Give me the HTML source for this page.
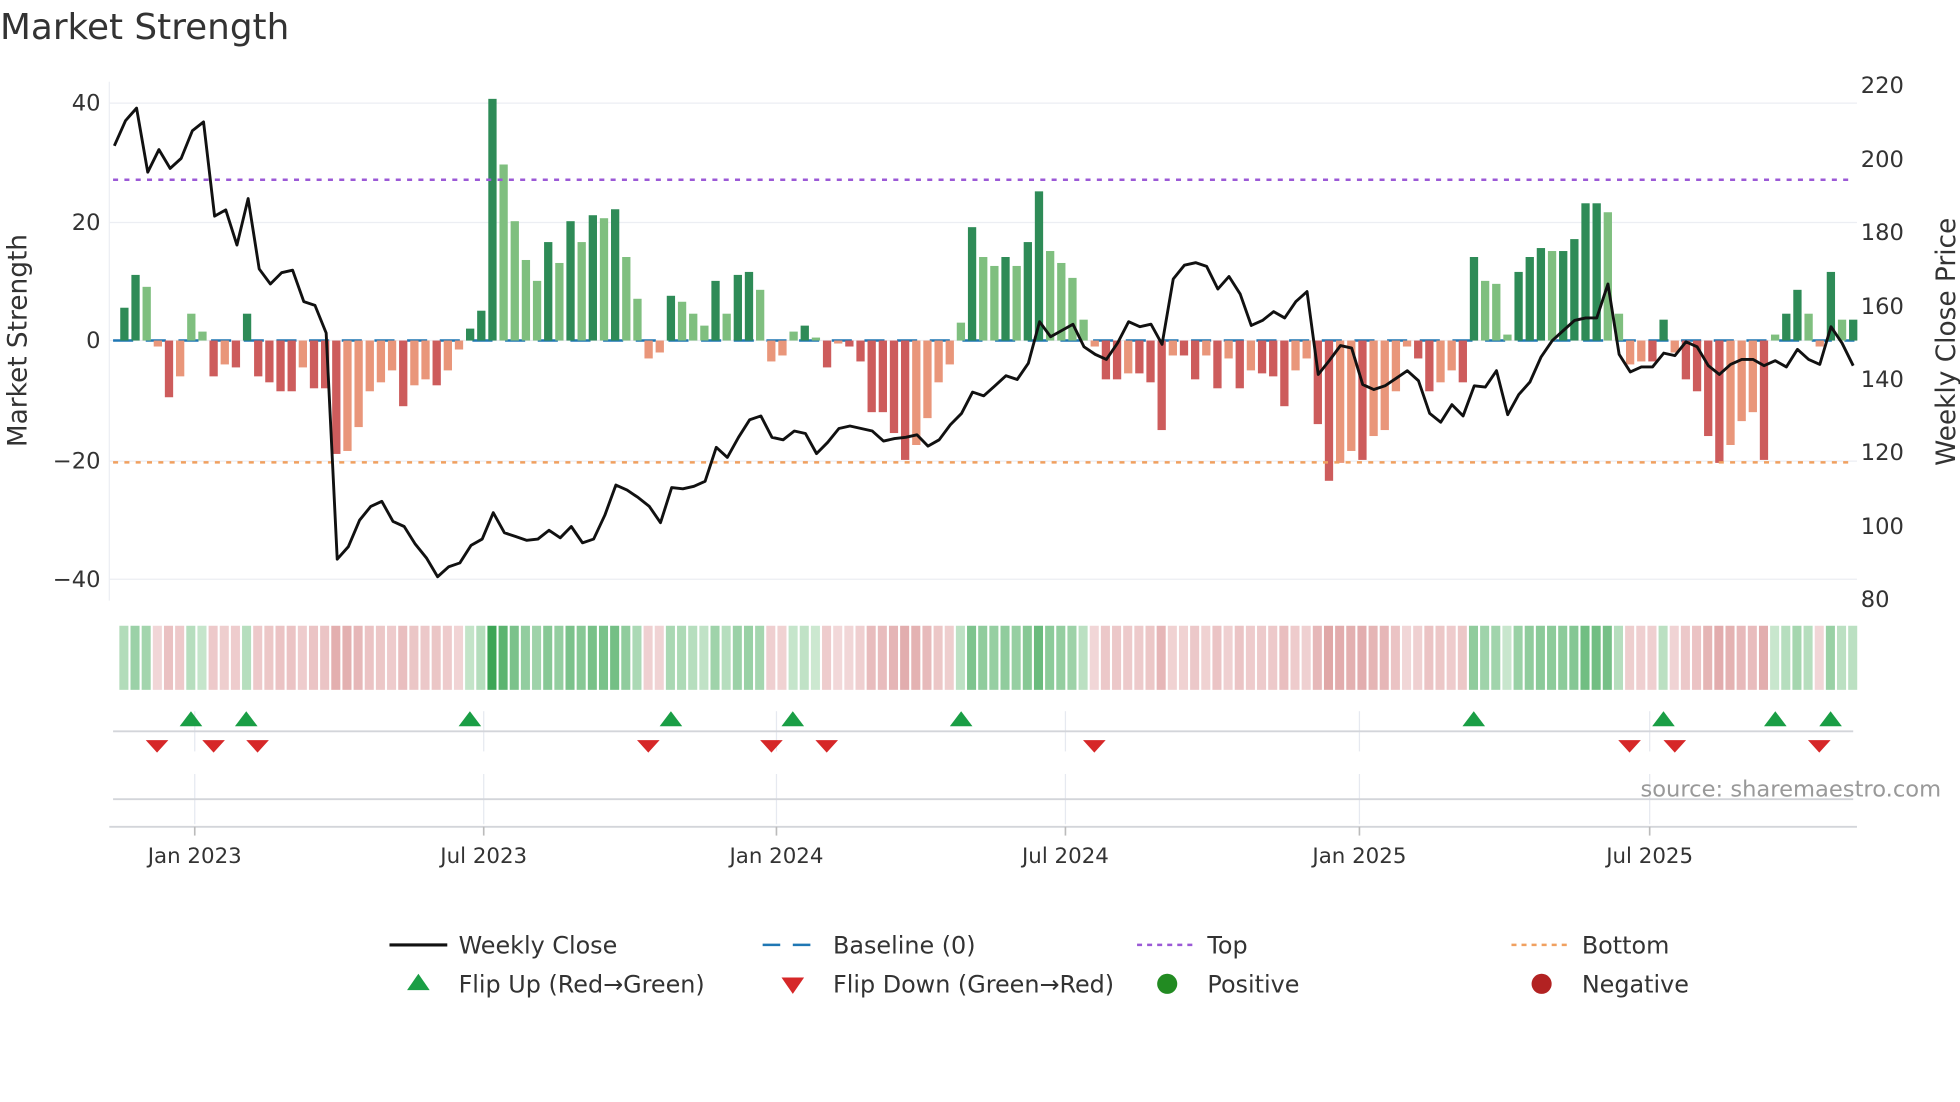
<!DOCTYPE html>
<html><head><meta charset="utf-8"><style>
html,body{margin:0;padding:0;background:#fff;width:1960px;height:1102px;overflow:hidden}
svg{display:block}
text{font-family:"DejaVu Sans","Liberation Sans",sans-serif}
</style></head><body>
<svg id="s" width="1960" height="1102" viewBox="0 0 1560 877" xmlns="http://www.w3.org/2000/svg">
<text x="0" y="31" font-size="28.5" fill="#333">Market Strength</text>
<g id="grid" stroke="#eceef3" stroke-width="1">
<line x1="87" x2="1478" y1="82" y2="82"/><line x1="87" x2="1478" y1="177" y2="177"/><line x1="87" x2="1478" y1="271" y2="271"/><line x1="87" x2="1478" y1="367" y2="367"/><line x1="87" x2="1478" y1="461" y2="461"/>
<line x1="87" x2="87" y1="65" y2="478"/>
</g>
<g font-size="18" fill="#333" text-anchor="end">
<text x="80" y="88">40</text><text x="80" y="183">20</text><text x="80" y="277">0</text><text x="80" y="373">−20</text><text x="80" y="467">−40</text>
</g>
<g font-size="18" fill="#333">
<text x="1481" y="74">220</text><text x="1481" y="133">200</text><text x="1481" y="191">180</text><text x="1481" y="250">160</text><text x="1481" y="308">140</text><text x="1481" y="366">120</text><text x="1481" y="425">100</text><text x="1481" y="483">80</text>
</g>
<text transform="translate(21,271) rotate(-90)" font-size="21" fill="#333" text-anchor="middle">Market Strength</text>
<text transform="translate(1556,272) rotate(-90)" font-size="21" fill="#333" text-anchor="middle">Weekly Close Price</text>
<line x1="90" x2="1476" y1="271" y2="271" stroke="#1f77b4" stroke-width="2" stroke-dasharray="16,10"/>
<g id="bars"></g>
<line x1="90" x2="1476" y1="143" y2="143" stroke="#9b59d6" stroke-width="2" stroke-dasharray="4,5"/>
<line x1="90" x2="1476" y1="368" y2="368" stroke="#f0a060" stroke-width="2" stroke-dasharray="4,5"/>
<polyline id="price" fill="none" stroke="#111" stroke-width="2.3" stroke-linejoin="round"/>
<g id="heat"></g>
<g stroke="#e6e9f0" stroke-width="1">
<line x1="155" x2="155" y1="566" y2="598"/><line x1="385" x2="385" y1="566" y2="598"/><line x1="618" x2="618" y1="566" y2="598"/><line x1="848" x2="848" y1="566" y2="598"/><line x1="1082" x2="1082" y1="566" y2="598"/><line x1="1313" x2="1313" y1="566" y2="598"/>
<line x1="155" x2="155" y1="616" y2="656"/><line x1="385" x2="385" y1="616" y2="656"/><line x1="618" x2="618" y1="616" y2="656"/><line x1="848" x2="848" y1="616" y2="656"/><line x1="1082" x2="1082" y1="616" y2="656"/><line x1="1313" x2="1313" y1="616" y2="656"/>
</g>
<line x1="90" x2="1475" y1="582" y2="582" stroke="#d3d5da" stroke-width="1.5"/>
<line x1="90" x2="1475" y1="636" y2="636" stroke="#d3d5da" stroke-width="1.5"/>
<line x1="87" x2="1478" y1="658" y2="658" stroke="#d3d5da" stroke-width="1.5"/>
<g stroke="#bbb" stroke-width="1.3">
<line x1="155" x2="155" y1="658" y2="665"/><line x1="385" x2="385" y1="658" y2="665"/><line x1="618" x2="618" y1="658" y2="665"/><line x1="848" x2="848" y1="658" y2="665"/><line x1="1082" x2="1082" y1="658" y2="665"/><line x1="1313" x2="1313" y1="658" y2="665"/>
</g>
<g id="marks"></g>
<text x="1545" y="634" font-size="18" fill="#999" text-anchor="end">source: sharemaestro.com</text>
<g font-size="17" fill="#333" text-anchor="middle">
<text x="155" y="687">Jan 2023</text><text x="385" y="687">Jul 2023</text><text x="618" y="687">Jan 2024</text><text x="848" y="687">Jul 2024</text><text x="1082" y="687">Jan 2025</text><text x="1313" y="687">Jul 2025</text>
</g>
<g font-size="19" fill="#333">
<line x1="310" x2="356" y1="752" y2="752" stroke="#111" stroke-width="2.5"/><text x="365" y="759">Weekly Close</text>
<line x1="607" x2="652" y1="752" y2="752" stroke="#1f77b4" stroke-width="2" stroke-dasharray="14,10"/><text x="663" y="759">Baseline (0)</text>
<line x1="905" x2="950" y1="752" y2="752" stroke="#9b59d6" stroke-width="2" stroke-dasharray="4,4"/><text x="961" y="759">Top</text>
<line x1="1203" x2="1248" y1="752" y2="752" stroke="#f0a060" stroke-width="2" stroke-dasharray="4,4"/><text x="1259" y="759">Bottom</text>
<polygon points="324,788 342,788 333,775" fill="#1a9e45"/><text x="365" y="790">Flip Up (Red→Green)</text>
<polygon points="622,778 640,778 631,791" fill="#d62728"/><text x="663" y="790">Flip Down (Green→Red)</text>
<circle cx="929" cy="783" r="8" fill="#228b22"/><text x="961" y="790">Positive</text>
<circle cx="1227" cy="783" r="8" fill="#b22222"/><text x="1259" y="790">Negative</text>
</g>
</svg>
<script>
var V=[5.5,11,9,-1,-9.5,-6,4.5,1.5,-6,-4,-4.5,4.5,-6,-7,-8.5,-8.5,-4.5,-8,-8,-19,-18.5,-14.5,-8.5,-7,-5,-11,-7.5,-6.5,-7.5,-5,-1.5,2,5,40.5,29.5,20,13.5,10,16.5,13,20,16.5,21,20.5,22,14,7,-3,-2,7.5,6.5,4.5,2.5,10,4.5,11,11.5,8.5,-3.5,-2.5,1.5,2.5,0.5,-4.5,-0.5,-1,-3.5,-12,-12,-15.5,-20,-17.5,-13,-7,-4,3,19,14,12.5,14,12.5,16.5,25,15,13,10.5,3.5,-1,-6.5,-6.5,-5.5,-5.5,-7,-15,-2.5,-2.5,-6.5,-2.5,-8,-3,-8,-5,-5.5,-6,-11,-5,-3,-14,-23.5,-20.5,-18.5,-20,-16,-15,-8.5,-1,-3,-8.5,-7,-5,-7,14,10,9.5,1,11.5,14,15.5,15,15,17,23,23,21.5,4.5,-4,-3.5,-3.5,3.5,-2,-6.5,-8.5,-16,-20.5,-17.5,-13.5,-12,-20,1,4.5,8.5,4.5,-1,11.5,3.5,3.5];
var P=[116,96,86,137,119,134,126,104,97,172,167,195,158,214,226,217,215,240,243,265,445,435,414,403,399,415,419,433,444,459,451,448,434,429,408,424,427,430,429,422,428,419,432,429,410,386,390,396,403,416,388,389,387,383,356,364,348,334,331,348,350,343,345,361,352,341,339,341,343,351,349,348,346,355,350,338,329,312,315,307,299,302,289,256,268,263,258,276,282,286,273,256,260,258,274,222,211,209,212,230,220,234,259,255,248,253,240,232,298,287,275,277,306,310,307,301,295,303,329,336,322,331,307,308,295,330,314,304,284,271,263,255,253,253,226,282,296,292,292,281,283,272,276,291,298,290,286,286,291,287,292,278,286,290,260,273,291];
var ns="http://www.w3.org/2000/svg";
function el(t,a,p){var e=document.createElementNS(ns,t);for(var k in a)e.setAttribute(k,a[k]);document.getElementById(p).appendChild(e);}
var x0=99,dx=(1475-99)/(V.length-1);
for(var i=0;i<V.length;i++){
 var x=x0+i*dx,v=V[i],prev=i?V[i-1]:0;
 var up=Math.abs(v)>=Math.abs(prev);
 var c=v>=0?(up?'#2e8b57':'#7fbf7f'):(up?'#cd5c5c':'#e9967a');
 var h=Math.abs(v)*4.75;
 el('rect',{x:x-3.3,y:v>=0?271-h:271,width:6.6,height:Math.max(h,0.5),fill:c},'bars');
 var t=Math.min(1,Math.abs(v)/40);t=Math.pow(t,0.8);
 var hc;
 if(v>=0){var r=Math.round(208-(208-60)*t),g=Math.round(234-(234-165)*t),b=Math.round(212-(212-85)*t);hc='rgb('+r+','+g+','+b+')';}
 else{var r=Math.round(243-(243-214)*t),g=Math.round(218-(218-140)*t),b=Math.round(219-(219-140)*t);hc='rgb('+r+','+g+','+b+')';}
 el('rect',{x:x-4,y:498,width:7.2,height:51,fill:hc},'heat');
}
var pts=[];for(var i=0;i<P.length;i++){pts.push((91+i*(1475-91)/(P.length-1)).toFixed(1)+','+P[i]);}
document.getElementById('price').setAttribute('points',pts.join(' '));
[152,196,374,534,631,765,1173,1324,1413,1457].forEach(function(x){el('polygon',{points:(x-9)+',578 '+(x+9)+',578 '+x+',566',fill:'#1a9e45'},'marks');});
[125,170,205,516,614,658,871,1297,1333,1448].forEach(function(x){el('polygon',{points:(x-9)+',589 '+(x+9)+',589 '+x+',599',fill:'#d62728'},'marks');});
</script>
</body></html>
